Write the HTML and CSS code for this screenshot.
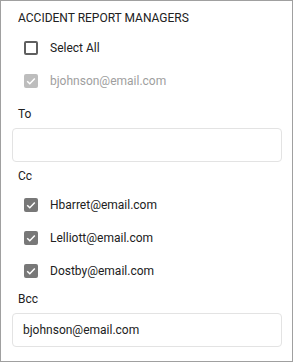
FILE: index.html
```html
<!DOCTYPE html>
<html>
<head>
<meta charset="utf-8">
<link rel="stylesheet" href="styles.css">
</head>
<body>
<div class="frame">
  <div class="title">ACCIDENT REPORT MANAGERS</div>
  <div class="row">
    <span class="box"></span>
    <span class="text">Select All</span>
  </div>
  <div class="row disabled">
    <span class="box checked"><svg viewBox="0 0 14 14" width="14" height="14"><path d="M3.2 7.2 L5.8 9.8 L10.8 4.6" fill="none" stroke="#fff" stroke-width="1.5"/></svg></span>
    <span class="text">bjohnson@email.com</span>
  </div>
  <div class="label label-to">To</div>
  <div class="input"></div>
  <div class="label label-cc">Cc</div>
  <div class="rows">
    <div class="row">
      <span class="box checked"><svg viewBox="0 0 14 14" width="14" height="14"><path d="M3.2 7.2 L5.8 9.8 L10.8 4.6" fill="none" stroke="#fff" stroke-width="1.5"/></svg></span>
      <span class="text">Hbarret@email.com</span>
    </div>
    <div class="row">
      <span class="box checked"><svg viewBox="0 0 14 14" width="14" height="14"><path d="M3.2 7.2 L5.8 9.8 L10.8 4.6" fill="none" stroke="#fff" stroke-width="1.5"/></svg></span>
      <span class="text">Lelliott@email.com</span>
    </div>
    <div class="row">
      <span class="box checked"><svg viewBox="0 0 14 14" width="14" height="14"><path d="M3.2 7.2 L5.8 9.8 L10.8 4.6" fill="none" stroke="#fff" stroke-width="1.5"/></svg></span>
      <span class="text">Dostby@email.com</span>
    </div>
  </div>
  <div class="label label-bcc">Bcc</div>
  <div class="input filled">bjohnson@email.com</div>
</div>
</body>
</html>
```

FILE: styles.css
```css
* { box-sizing: border-box; }
html, body { margin: 0; padding: 0; background: #fff; }
body {
  font-family: Roboto, "Liberation Sans", sans-serif;
  font-size: 12px;
  color: #212121;
}
.frame {
  width: 293px;
  height: 362px;
  border: 1px solid #a0a0a0;
  display: flex;
  flex-direction: column;
}
.title {
  height: 30px;
  line-height: 34px;
  padding-left: 17px;
}
.row {
  height: 33px;
  display: flex;
  align-items: center;
  padding-left: 23px;
  gap: 12px;
}
.box {
  width: 14px;
  height: 14px;
  border: 2px solid #5f5f5f;
  border-radius: 2px;
  flex: none;
}
.box.checked {
  border: none;
  background: #787878;
}
.box svg { display: block; }
.disabled .box.checked { background: #bdbdbd; }
.disabled .text { color: #9e9e9e; }
.label {
  padding-left: 17px;
}
.label-to {
  height: 31px;
  padding-top: 4px;
  line-height: 26px;
}
.input {
  height: 34px;
  margin: 0 10px 0 11px;
  border: 1px solid #e3e3e3;
  border-radius: 4px;
  padding-left: 10px;
  line-height: 32px;
}
.label-cc {
  height: 22px;
  line-height: 22px;
  margin-top: 3px;
  margin-bottom: 1px;
}
.label-bcc {
  height: 22px;
  line-height: 22px;
  margin-top: 1px;
  margin-bottom: 3px;
}
```
